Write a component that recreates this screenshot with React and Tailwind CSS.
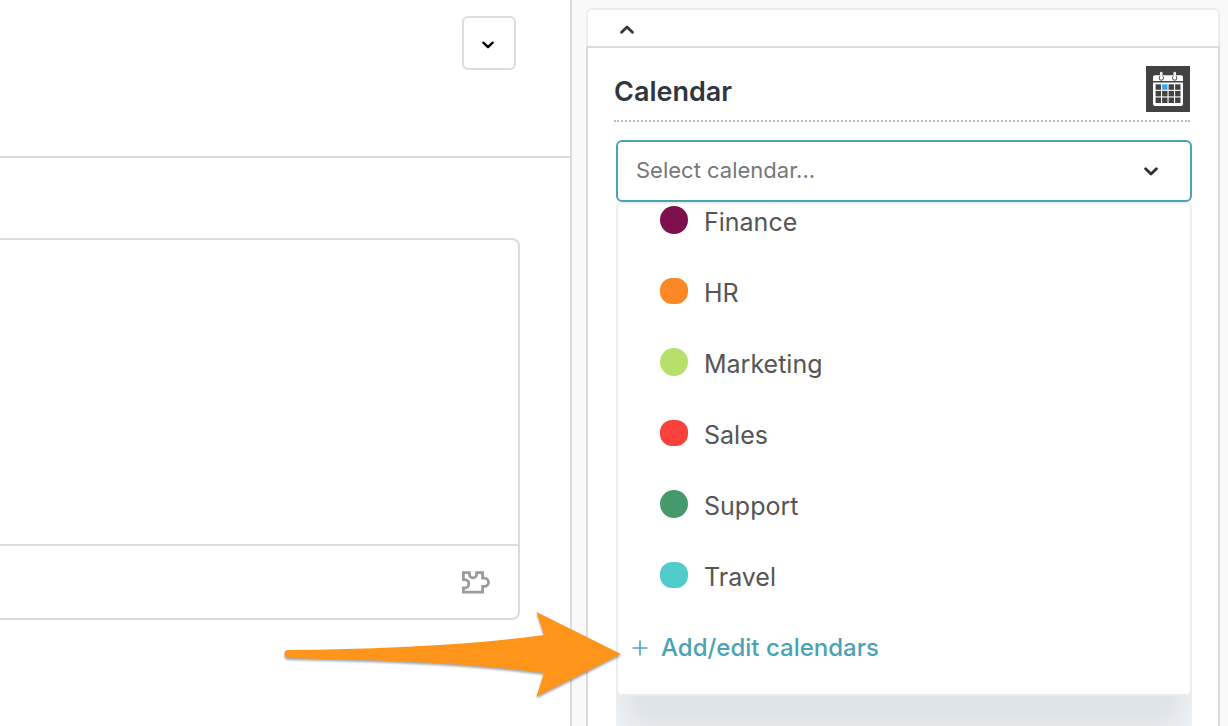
import { useState } from 'react';

const CALENDARS = [
    { name: 'Finance', dot: 'h-7 rounded-full bg-[#7d0f4a]' },
    { name: 'HR', dot: 'h-[26px] rounded-[12px] bg-[#fb8824]' },
    { name: 'Marketing', dot: 'h-7 rounded-full bg-[#b6e06a]' },
    { name: 'Sales', dot: 'h-[26px] rounded-[12px] bg-[#f9423c]' },
    { name: 'Support', dot: 'h-7 rounded-full bg-[#46996d]' },
    { name: 'Travel', dot: 'h-[26px] rounded-[12px] bg-[#50cdcb]' },
];

function Chevron({ up, className }) {
    return (
        <svg viewBox="0 0 14 9" fill="none" stroke="currentColor" strokeWidth="2.8" strokeLinecap="round" strokeLinejoin="round" className={className} aria-hidden="true">
            <path d={up ? 'M1.6 7.2 7 2l5.4 5.2' : 'M1.6 1.8 7 7l5.4-5.2'} />
        </svg>
    );
}

function PuzzleIcon() {
    return (
        <svg viewBox="0 0 28 23" fill="none" stroke="#9b9b9b" strokeWidth="2.8" className="w-7 h-[23px]" aria-hidden="true">
            <path d="M1.4 1.6H7.4V3.2A3.6 3.6 0 0 0 14.6 3.2V1.6H20.6V7.2H22.4A4.1 4.1 0 0 1 22.4 15.4H20.6V21.2H1.4V17H2.6A4.2 4.2 0 0 0 2.6 8.6H1.4Z" />
        </svg>
    );
}

function CalendarLogo() {
    const cols = [9.6, 16.1, 22.6, 29.1];
    const rows = [18.3, 24.9, 31.5];
    return (
        <svg viewBox="0 0 44 46" className="w-11 h-[46px]" role="img" aria-label="Calendar app">
            <rect width="44" height="46" fill="#424242" />
            <path d="M9 9.2h26a2 2 0 0 1 2 2V15H7v-3.8a2 2 0 0 1 2-2Z" fill="#fff" />
            <path d="M7 16.4h30V38a2 2 0 0 1-2 2H9a2 2 0 0 1-2-2Z" fill="#fff" />
            {rows.map((y) => cols.map((x) => (
                <rect key={`${x}-${y}`} x={x} y={y} width="5.4" height="5.5" fill={x === 16.1 && y === 18.3 ? '#3ba3f2' : '#424242'} />
            )))}
            {[15.3, 28.7].map((x) => (
                <g key={x}>
                    <circle cx={x} cy="12" r="2.2" fill="none" stroke="#424242" strokeWidth="1" />
                    <path d={`M${x} 7V12`} stroke="#fff" strokeWidth="2.4" strokeLinecap="round" />
                </g>
            ))}
        </svg>
    );
}

function PointerArrow() {
    return (
        <svg viewBox="0 0 337 88" className="absolute top-[612px] right-[607px] w-[337px] h-[88px] overflow-visible pointer-events-none drop-shadow-[0_2px_1px_rgba(0,0,0,0.35)]" aria-hidden="true">
            <path d="M4.500 38C90 37 180 34 260 23L252.500 0L337 42L252.500 84.500L260 61C180 50 90 48 4.500 46A4 4 0 0 1 4.500 38Z" fill="#ff941a" />
        </svg>
    );
}

function CalendarPicker() {
    const [open, setOpen] = useState(true);
    const [selected, setSelected] = useState('');

    const toggle = (e) => {
        e.preventDefault();
        setOpen(!open);
    };

    const choose = (name) => {
        setSelected(name);
        setOpen(false);
    };

    return (
        <div className="flex-1 flex flex-col min-h-0 ml-7 mr-[26px]">
            <div className="relative shrink-0">
                <select
                    id="calendar"
                    value={selected}
                    onMouseDown={toggle}
                    onChange={e => setSelected(e.target.value)}
                    className="block w-full h-[62px] px-[18px] pb-[2px] appearance-none rounded-md border-2 border-[#4aa3b3] bg-white text-[22px] text-[#777] focus:outline-none"
                >
                    <option value="">Select calendar...</option>
                    {CALENDARS.map(({ name }) => <option key={name} value={name}>{name}</option>)}
                </select>
                <Chevron className="absolute right-[34px] top-[27px] w-[14px] h-[9px] text-[#2c2f33] pointer-events-none" />
            </div>

            {open && (
                <div className="flex-1 min-h-0 overflow-hidden">
                    <div className="border-2 border-[#ededee] rounded-md bg-white pt-[2px] pb-[34px] shadow-[0_40px_36px_4px_#dfe4e8]">
                        <ul className="flex flex-col gap-[43px]">
                            {CALENDARS.map(({ name, dot }) => (
                                <li key={name}>
                                    <button type="button" onClick={() => choose(name)} className="flex items-center gap-4 w-full h-7 pl-[42px] text-[25px] leading-7 text-[#555]">
                                        <span className={`w-7 ${dot}`} />
                                        <span className="pt-[3px]">{name}</span>
                                    </button>
                                </li>
                            ))}
                            <li>
                                <a href="#calendars" className="flex items-center gap-[13px] h-7 pl-[14px] pt-[3px] text-[24px] leading-7 font-medium text-[#4aa3b3]">
                                    <svg viewBox="0 0 16 16" stroke="currentColor" strokeWidth="1.6" className="w-4 h-4" aria-hidden="true">
                                        <path d="M8 0.5V15.5M0.5 8H15.5" />
                                    </svg>
                                    Add/edit calendars
                                </a>
                            </li>
                        </ul>
                    </div>
                </div>
            )}
        </div>
    );
}

export default function App() {
    return (
        <div className="relative flex h-screen overflow-hidden bg-[#f9f9f9] font-['Inter',sans-serif]">
            <main className="flex-1 min-w-0 bg-white border-r-2 border-[#dadbdc]">
                <div className="flex justify-end pt-4 pr-[54px] pb-[86px] border-b-2 border-[#dadbdc]">
                    <button type="button" aria-label="More options" className="flex items-center justify-center w-[54px] h-[54px] pt-[3px] pr-[2px] rounded-md border-2 border-[#dadcde] text-black">
                        <Chevron className="w-3 h-2" />
                    </button>
                </div>
                <div className="mt-20 mr-[50px] border-2 border-l-0 border-[#dadbdc] rounded-r-lg">
                    <textarea aria-label="Reply" className="block w-full h-[304px] p-4 resize-none focus:outline-none" />
                    <div className="flex items-center justify-end h-[74px] pr-7 border-t-2 border-[#dadbdc]">
                        <button type="button" aria-label="Insert app">
                            <PuzzleIcon />
                        </button>
                    </div>
                </div>
            </main>

            <aside className="flex flex-col w-[656px] pt-2 pl-[14px] pr-2">
                <div className="flex items-center h-[38px] pl-8 pt-[2px] bg-white border-2 border-b-0 border-[#ebeced] rounded-t-md">
                    <button type="button" aria-label="Collapse panel" className="text-[#30363c]">
                        <Chevron up className="w-[14px] h-[9px]" />
                    </button>
                </div>
                <section className="flex-1 flex flex-col min-h-0 bg-white border-2 border-b-0 border-[#dadbdc]">
                    <div className="flex items-center justify-between shrink-0 h-[74px] pt-[10px] mb-[18px] ml-[26px] mr-7 border-b-2 border-dotted border-[#bbb]">
                        <h2 className="pt-[7px] text-[27px] font-semibold text-[#2f363d]">
                            <label htmlFor="calendar">Calendar</label>
                        </h2>
                        <CalendarLogo />
                    </div>
                    <CalendarPicker />
                </section>
            </aside>

            <PointerArrow />
        </div>
    );
}
